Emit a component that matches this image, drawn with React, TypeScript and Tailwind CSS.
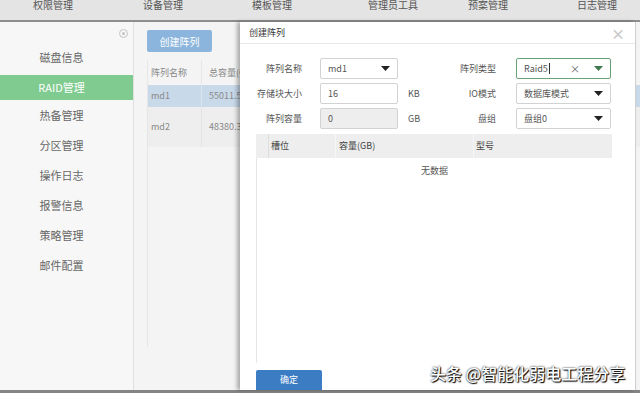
import React from "react";

const Arrow = ({ color = "#222" }: { color?: string }) => (
  <svg width="9" height="5" viewBox="0 0 9 5" className="shrink-0">
    <path d="M0 0 L9 0 L4.5 5 Z" fill={color} />
  </svg>
);

const Select = ({ value, w = "w-[78px]" }: { value: string; w?: string }) => (
  <div className={`${w} h-[21px] border border-[#d2d2d2] rounded-[2px] bg-white flex items-center justify-between pl-[7px] pr-[7px] text-[#555]`}>
    <span>{value}</span>
    <Arrow />
  </div>
);

const Input = ({ value, disabled }: { value: string; disabled?: boolean }) => (
  <div
    className={`w-[78px] h-[21px] border border-[#d2d2d2] rounded-[2px] flex items-center pl-[7px] text-[#555] ${
      disabled ? "bg-[#eeeeee]" : "bg-white"
    }`}
  >
    {value}
  </div>
);

export default function App() {
  const navItems: [string, string][] = [
    ["权限管理", "w-[110px]"],
    ["设备管理", "w-[109px]"],
    ["模板管理", "w-[116px]"],
    ["管理员工具", "w-[100px]"],
    ["预案管理", "w-[109px]"],
    ["日志管理", "w-[60px]"],
  ];
  const side = ["热备管理", "分区管理", "操作日志", "报警信息", "策略管理", "邮件配置"];
  return (
    <div className="relative w-[640px] h-[393px] overflow-hidden bg-[#f4f4f4] font-['Noto_Sans_CJK_SC','Liberation_Sans',sans-serif] flex flex-col">
      {/* nav */}
      <div className="h-[22px] shrink-0 bg-[#e4e4e4] border-b-2 border-[#8e8e8e] flex pl-[33px] items-start">
        {navItems.map(([t, w]) => (
          <div key={t} className={`${w} text-[10px] leading-[12px] -mt-[1px] text-[#555] whitespace-nowrap`}>
            {t}
          </div>
        ))}
      </div>

      {/* main */}
      <div className="flex-1 flex min-h-0">
        <div className="w-[134px] shrink-0 bg-[#f7f7f7] border-r border-[#e0e0e0] flex flex-col text-[11px] text-[#666]">
          <div className="h-[20px] flex items-center justify-end pr-[5px] pt-[3px]">
            <div className="w-[9px] h-[9px] rounded-full border border-[#c4c4c4] flex items-center justify-center">
              <div className="w-[3px] h-[3px] rounded-full bg-[#c4c4c4]" />
            </div>
          </div>
          <div className="h-[30px] flex items-center justify-center pr-[10px]">磁盘信息</div>
          <div className="h-[25px] mt-[3px] bg-[#7fcb90] text-white flex items-center justify-center pr-[10px]">RAID管理</div>
          {side.map((s) => (
            <div key={s} className="h-[30px] flex items-center justify-center pr-[10px] first:mt-[2px]">
              {s}
            </div>
          ))}
        </div>
        <div className="flex-1 pl-[13px] pt-[8px] flex flex-col">
          <div className="w-[65px] h-[22px] bg-[#8bb5dc] rounded-[2px] text-white text-[10px] flex items-center justify-center">
            创建阵列
          </div>
          <div className="mt-[8px] h-[287px] border-l border-[#e6e6e6] flex flex-col text-[9px] text-[#888]">
            <div className="h-[25px] flex items-center">
              <div className="w-[53px] pl-[3px]">阵列名称</div>
              <div className="pl-[7px] border-l border-[#e6e6e6] h-full flex items-center whitespace-nowrap">总容量(GB)</div>
            </div>
            <div className="h-[22px] bg-[#c8d9ea] flex items-center">
              <div className="w-[53px] pl-[3px]">md1</div>
              <div className="pl-[7px] border-l border-[#d8e4ef] h-full flex items-center">55011.52</div>
            </div>
            <div className="h-[40px] bg-[#eeeeee] flex items-center">
              <div className="w-[53px] pl-[3px]">md2</div>
              <div className="pl-[7px] border-l border-[#e4e4e4] h-full flex items-center">48380.33</div>
            </div>
          </div>
        </div>
      </div>

      <div className="h-[3px] shrink-0 bg-[#858585]" />

      {/* modal */}
      <div className="absolute left-[240px] top-[22px] w-[396px] h-[368px] bg-white border-r border-[#d0d0d0] shadow-[-3px_0_4px_rgba(0,0,0,0.3)] flex flex-col text-[9px] text-[#555]">
        <div className="h-[22px] border-b border-[#e8e8e8] flex items-center justify-between pl-[9px] pr-[10px] shrink-0">
          <span className="text-[#333]">创建阵列</span>
          <span className="text-[14px] leading-none text-[#c8c8c8] font-bold">×</span>
        </div>
        <div className="pt-[14px] flex flex-col gap-[4px]">
          <div className="flex items-center h-[21px]">
            <div className="w-[62px] text-right">阵列名称</div>
            <div className="ml-[18px]"><Select value="md1" /></div>
            <div className="w-[40px] ml-[10px]" />
            <div className="w-[48px] text-right">阵列类型</div>
            <div className="ml-[20px] w-[95px] h-[21px] border border-[#6aa277] rounded-[2px] bg-white flex items-center pl-[7px] pr-[7px]">
              <span>Raid5</span>
              <span className="w-[1px] h-[11px] bg-[#333] ml-[1px]" />
              <span className="ml-auto mr-[14px] text-[10px] text-[#666]">×</span>
              <Arrow color="#3f7a4c" />
            </div>
          </div>
          <div className="flex items-center h-[21px]">
            <div className="w-[62px] text-right">存储块大小</div>
            <div className="ml-[18px]"><Input value="16" /></div>
            <div className="w-[40px] ml-[10px]">KB</div>
            <div className="w-[48px] text-right">IO模式</div>
            <div className="ml-[20px]"><Select value="数据库模式" w="w-[95px]" /></div>
          </div>
          <div className="flex items-center h-[21px]">
            <div className="w-[62px] text-right">阵列容量</div>
            <div className="ml-[18px]"><Input value="0" disabled /></div>
            <div className="w-[40px] ml-[10px]">GB</div>
            <div className="w-[48px] text-right">盘组</div>
            <div className="ml-[20px]"><Select value="盘组0" w="w-[95px]" /></div>
          </div>
        </div>

        <div className="ml-[16px] w-[356px] mt-[5px] flex flex-col">
          <div className="h-[24px] bg-[#eeeeee] flex items-stretch text-[#444]">
            <div className="w-[13px] border-r border-[#dedede]" />
            <div className="w-[67px] pl-[2px] flex items-center border-r border-[#f6f6f6]">槽位</div>
            <div className="w-[138px] pl-[3px] flex items-center border-r border-[#f6f6f6]">容量(GB)</div>
            <div className="flex-1 pl-[2px] flex items-center">型号</div>
          </div>
          <div className="h-[205px] border-l border-[#e6e6e6] flex flex-col">
            <div className="h-[26px] flex items-center justify-center text-[#555]">无数据</div>
          </div>
        </div>

        <div className="ml-[16px] mt-[7px] w-[66px] h-[20px] bg-[#3b7cc3] rounded-t-[2px] text-white flex items-center justify-center">
          确定
        </div>
      </div>

      {/* watermark */}
      <div className="absolute left-[430px] top-[362px] text-[16px] leading-[22px] text-white font-medium [text-shadow:0_0_2px_#000,1px_1px_1px_#000] whitespace-nowrap">
        头条 @智能化弱电工程分享
      </div>
    </div>
  );
}
